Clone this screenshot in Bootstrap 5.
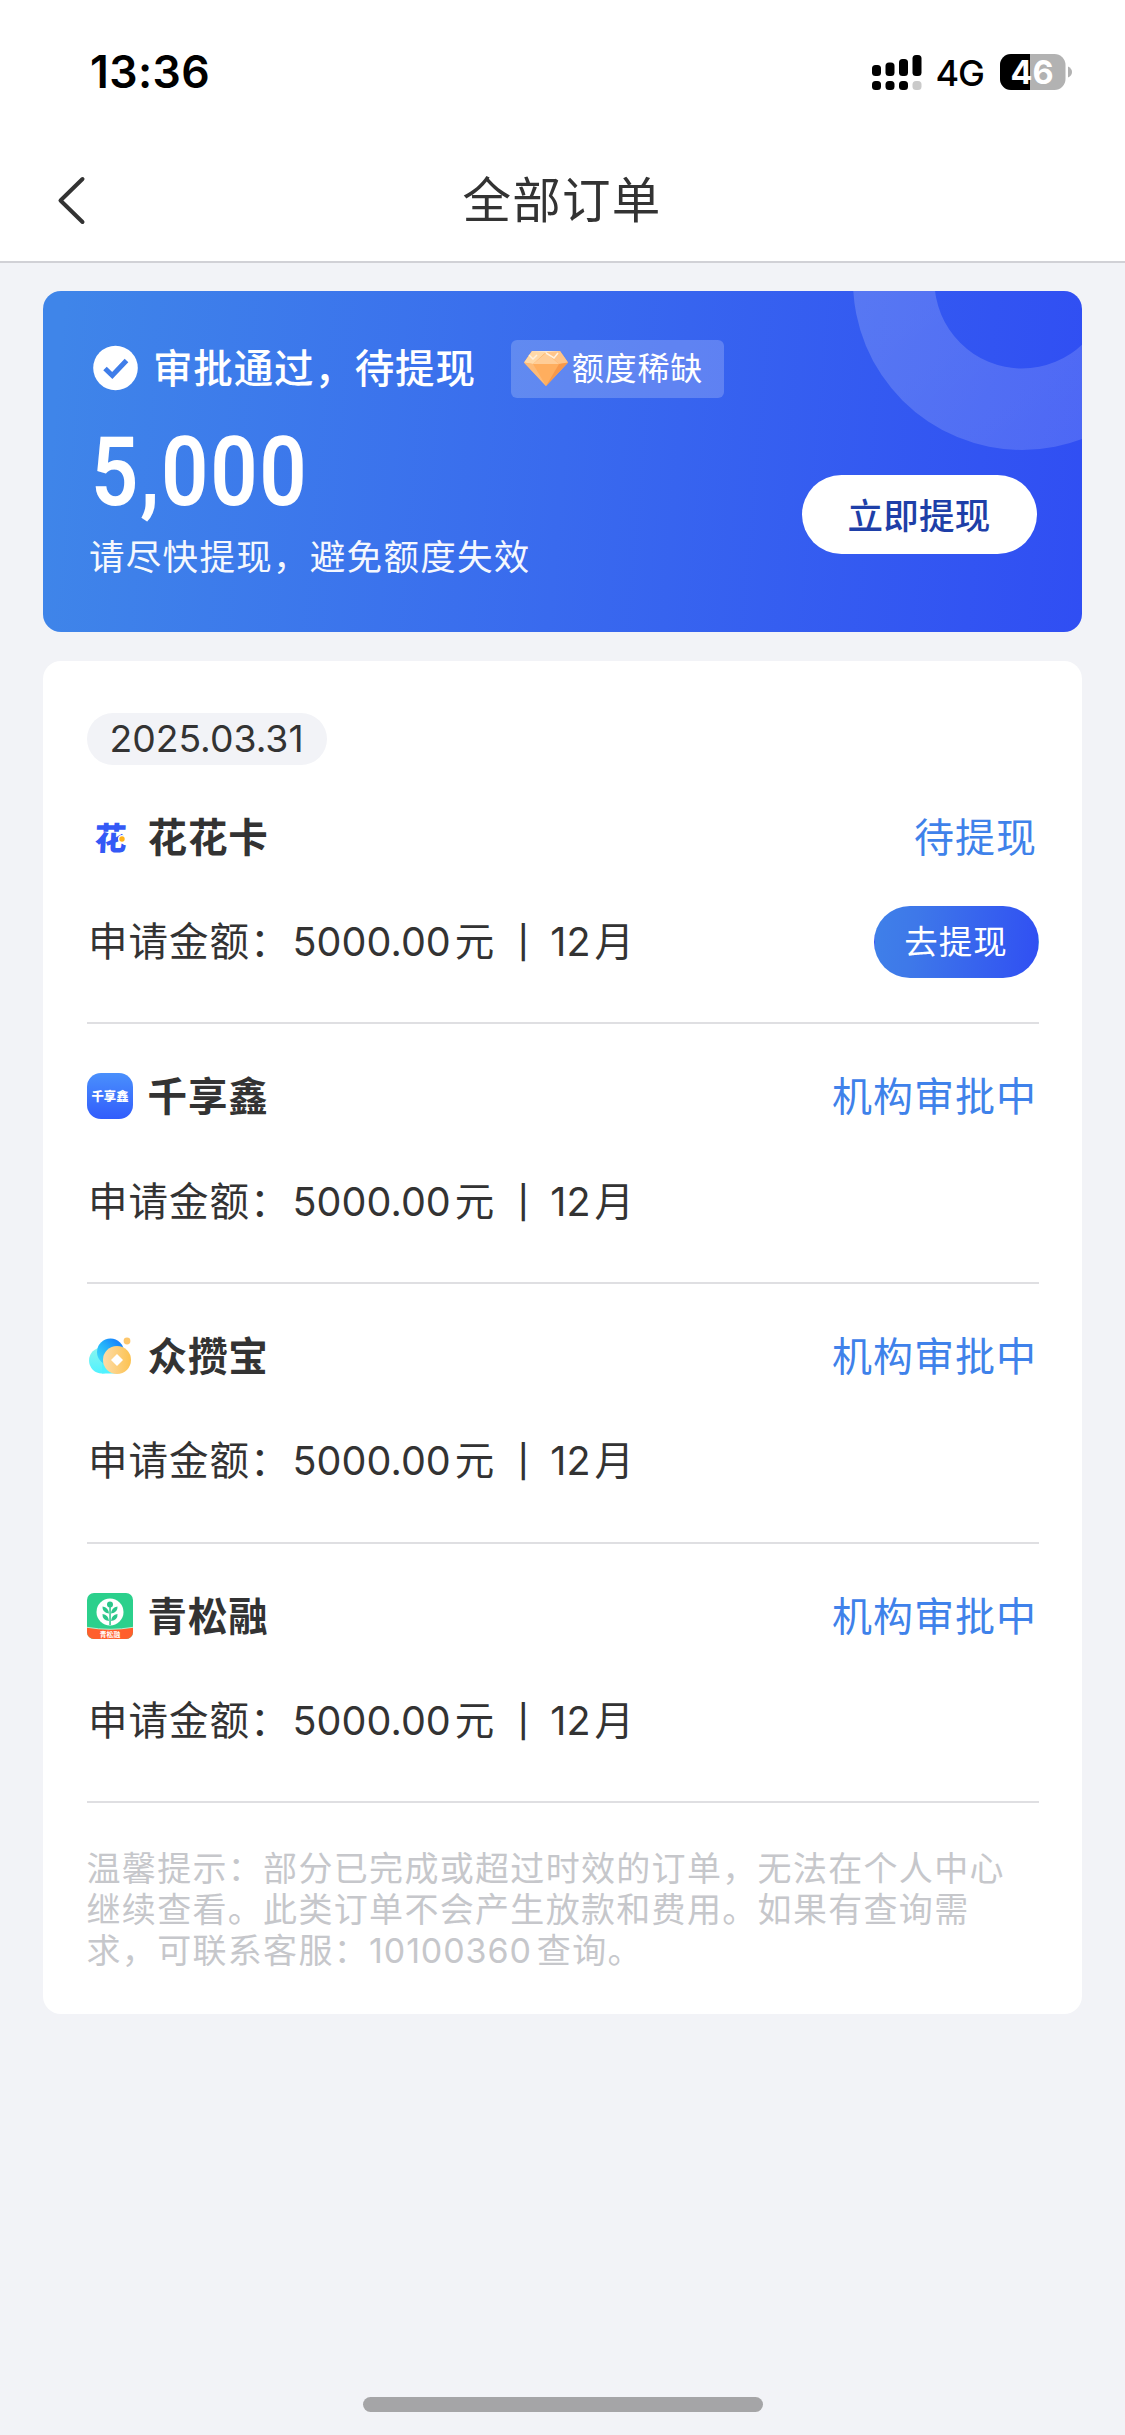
<!DOCTYPE html>
<html lang="zh-CN">
<head>
<meta charset="utf-8">
<meta name="viewport" content="width=device-width, initial-scale=1">
<title>全部订单</title>
<link href="https://cdn.jsdelivr.net/npm/bootstrap@5.3.0/dist/css/bootstrap.min.css" rel="stylesheet">
<style>
body{background:#f2f3f7;color:#333;font-family:Inter,"Noto Sans CJK SC",sans-serif;min-height:2435px}
svg{display:block;flex:none;overflow:visible}
.status-bar{height:144px;padding:0 52px 0 90px}
.clock{font-size:44.5px;font-weight:600;color:#000;line-height:144px;letter-spacing:.4px}
.net{font-size:36px;font-weight:500;color:#000;line-height:144px;margin:1px 16px 0 13px;letter-spacing:-1px}
.title-bar{height:119px;padding:0 56px 4px 55px;border-bottom:2px solid #d1d1d6}
.title-text{font-size:48.5px;letter-spacing:1.2px;line-height:56px}
.side{width:60px}
.wrap{padding:28px 43px 0 43px}
.banner{height:341px;border-radius:18px;background:linear-gradient(95deg,#3f85e9 2%,#396aee 50%,#304ef3 100%);color:#fff}
.ring{right:0;top:0;overflow:hidden}
.banner-body{padding:48px 45px 0 50px}
.pass{font-size:39.5px;font-weight:500;letter-spacing:.85px;line-height:58px;margin-left:15px;padding-top:1px}
.scarce{height:58px;border-radius:6px;background:rgba(255,255,255,.2);font-size:32px;letter-spacing:.8px;width:213px;padding-left:13px;margin-left:35px}
.amount{font-family:Roboto,sans-serif;font-size:95.5px;font-weight:600;line-height:96px;transform:scaleX(.87);transform-origin:0 50%;margin:26px 0 0 -2px;width:280px;letter-spacing:1.8px}
.hint{font-size:35.5px;letter-spacing:1.3px;line-height:50px;margin-left:-4px;margin-top:13px;opacity:.95}
.btn-now{width:235px;height:79px;background:#fff;color:#1e3fa8;font-size:35.5px;font-weight:500;right:45.5px;top:184px;letter-spacing:.3px;line-height:1;padding:4px 0 0}
.orders{margin-top:28.5px;border-radius:18px;background:#fff;height:1353px;padding:52px 43.5px 0 43.5px}
.date-pill{width:240px;height:52px;background:#f2f3f7;font-size:37.3px;line-height:52px}
.order{height:259.7px;padding-top:49px;border-bottom:2px solid #dfdfe2}
.order-head{height:46px}
.order-name{font-size:39.5px;font-weight:700;letter-spacing:.9px;line-height:46px;margin-left:15px;padding-top:2px}
.state{color:#3f82ea;font-size:40px;letter-spacing:1px;line-height:46px;padding-top:2px;margin-right:1.5px}
.order-info{height:72px;margin-top:46px;font-size:39.5px;line-height:72px}
.lbl{width:206px;letter-spacing:1px;padding:1px 0 0 1.5px}
.num{letter-spacing:.05px;padding-top:1px}
.yuan{margin-left:4px;padding-top:1px}
.rule-mark{font-size:32px;font-weight:500;width:20px;text-align:center;margin:0 17px 0 19px;padding-top:3px}
.mon{margin-left:4px;padding-top:1px}
.btn-go{width:165px;height:72px;background:linear-gradient(97deg,#3f80e9,#3e78e9 25%,#304ff3);color:#fff;font-size:33.5px;letter-spacing:1px;line-height:1;padding:2px 0 0}
.tips{font-size:34px;letter-spacing:1.32px;line-height:41px;color:#c6c7cb;margin:45px -10px 0 0}
.tips .tel{letter-spacing:.9px;margin-right:5px}
.home-bar{width:400px;height:15px;background:#a5a5a7;margin:383px auto 0}
</style>
</head>
<body>
<header class="bg-white">
  <div class="status-bar d-flex align-items-center justify-content-between">
    <span class="clock">13:36</span>
    <div class="d-flex align-items-center">
      <svg width="50" height="36" viewBox="0 0 50 36"><g fill="#000"><rect x="0" y="11" width="9" height="11" rx="3.500"/><rect x="13.500" y="8.500" width="9" height="13.500" rx="3.500"/><rect x="27" y="5" width="9" height="17" rx="3.500"/><rect x="40.500" y="1" width="9" height="21" rx="3.500"/><rect x="0" y="27" width="9" height="9" rx="3.500"/><rect x="13.500" y="27" width="9" height="9" rx="3.500"/><rect x="27" y="27" width="9" height="9" rx="3.500"/></g><rect x="40.500" y="27" width="9" height="9" rx="3.500" fill="#cacaca"/></svg>
      <span class="net">4G</span>
      <svg width="73" height="36" viewBox="0 0 73 36"><defs><clipPath id="cell"><rect width="65.500" height="36" rx="11"/></clipPath></defs><g clip-path="url(#cell)"><rect width="66" height="36" fill="#b2b2b2"/><rect width="30" height="36"/></g><path d="M68 12.500q4 2 4 5.500t-4 5.500z" fill="#b2b2b2"/><text x="32" y="29.500" text-anchor="middle" fill="#fff" font-family="Inter" font-size="32.500" font-weight="700">46</text></svg>
    </div>
  </div>
  <nav class="title-bar d-flex align-items-center justify-content-between">
    <div class="side"><svg width="32" height="50" viewBox="0 0 32 50"><path d="M27.500 3L5.500 24.500L27.500 46" fill="none" stroke="#333" stroke-width="4" stroke-linecap="round" stroke-linejoin="round"/></svg></div>
    <span class="title-text">全部订单</span>
    <div class="side"></div>
  </nav>
</header>
<main class="wrap">
  <section class="banner position-relative overflow-hidden">
    <svg class="ring position-absolute" width="230" height="160" viewBox="0 0 230 160"><defs><linearGradient id="rg" x1="0" y1="0" x2="1" y2="1"><stop offset="0" stop-color="#fff" stop-opacity=".19"/><stop offset="1" stop-color="#fff" stop-opacity=".13"/></linearGradient></defs><path fill="url(#rg)" fill-rule="evenodd" d="M1-10a169 169 0 0 0 338 0a169 169 0 0 0-338 0zM82.500-10a87.500 87.500 0 0 0 175 0a87.500 87.500 0 0 0-175 0z"/></svg>
    <div class="banner-body">
      <div class="d-flex align-items-center">
        <svg width="45" height="45" viewBox="0 0 45 45"><circle cx="22.500" cy="22" r="22.300" fill="#fff"/><path d="M12 22.500l7.300 7L33.500 14.500" fill="none" stroke="#3f7de9" stroke-width="5"/></svg>
        <span class="pass">审批通过，待提现</span>
        <span class="scarce d-flex align-items-center">
          <svg width="44" height="35" viewBox="0 0 44 35" class="me-1"><path d="M8 0h28l8 11.500L22 35 0 11.500z" fill="#fdb266"/><path d="M8 0h28l-6 2-8 0-12 1z" fill="#ffe9cf"/><path d="M8 0l14 1L9 13 0 11.500z" fill="#ffd9a8"/><path d="M9 13L22 2l13 11z" fill="#ffcd97"/><path d="M36 0l8 11.500L35 13 22 1z" fill="#ffc58a"/><path d="M9 13h26L22 35z" fill="#ffae5e"/><path d="M35 13l9-1.500L22 35z" fill="#f8994a"/><path d="M0 11.500L9 13l13 22z" fill="#fdbb78"/><path d="M5 4l4 4 4-4M22 2l8 5 4-5" fill="none" stroke="#fff1de" stroke-width="1.500"/></svg>额度稀缺</span>
      </div>
      <div class="amount">5,000</div>
      <div class="hint">请尽快提现，避免额度失效</div>
    </div>
    <button class="btn btn-now rounded-pill position-absolute">立即提现</button>
  </section>

  <section class="orders">
    <div class="date-pill rounded-pill text-center">2025.03.31</div>

    <article class="order">
      <div class="order-head d-flex align-items-center">
        <svg width="46" height="46" viewBox="0 0 46 46"><text transform="translate(7 35.500) skewX(-3)" font-family="Noto Sans CJK SC" font-size="32" font-weight="900" fill="#3459f6">花</text><circle cx="35" cy="25" r="4" fill="#fff"/><circle cx="35" cy="25" r="2.700" fill="#ffb31a"/></svg>
        <span class="order-name">花花卡</span><span class="state ms-auto">待提现</span>
      </div>
      <div class="order-info d-flex align-items-center"><span class="lbl">申请金额：</span><span class="num">5000.00</span><span class="yuan">元</span><span class="rule-mark">|</span><span class="num">12</span><span class="mon">月</span><button class="btn btn-go rounded-pill ms-auto">去提现</button></div>
    </article>

    <article class="order">
      <div class="order-head d-flex align-items-center">
        <svg width="46" height="46" viewBox="0 0 46 46"><defs><linearGradient id="bl" x2="0" y2="1"><stop stop-color="#4a90fc"/><stop offset="1" stop-color="#315cfc"/></linearGradient></defs><rect width="46" height="46" rx="14" fill="url(#bl)"/><text x="23" y="27.500" text-anchor="middle" fill="#fff" font-family="Noto Sans CJK SC" font-size="12.300" font-weight="900">千享鑫</text></svg>
        <span class="order-name">千享鑫</span><span class="state ms-auto">机构审批中</span>
      </div>
      <div class="order-info d-flex align-items-center"><span class="lbl">申请金额：</span><span class="num">5000.00</span><span class="yuan">元</span><span class="rule-mark">|</span><span class="num">12</span><span class="mon">月</span></div>
    </article>

    <article class="order">
      <div class="order-head d-flex align-items-center">
        <svg width="46" height="46" viewBox="0 0 46 46"><defs><linearGradient id="cy" x2="0" y2="1"><stop stop-color="#8af5ee"/><stop offset="1" stop-color="#50f2ff"/></linearGradient><linearGradient id="sk" x1="1" x2="0" y2="1"><stop stop-color="#0e6dff"/><stop offset=".5" stop-color="#25b2fa"/><stop offset="1" stop-color="#42e3fb"/></linearGradient><linearGradient id="gd" x2="1"><stop stop-color="#fddcaa"/><stop offset="1" stop-color="#fcc24f"/></linearGradient></defs><circle cx="15" cy="27.500" r="13" fill="url(#cy)"/><path d="M15 40.500h15V28H15z" fill="#50f2ff"/><circle cx="23.500" cy="19" r="13.500" fill="url(#sk)"/><circle cx="30" cy="27" r="14" fill="url(#gd)"/><path d="M30 21l6 6-6 6-6-6z" fill="#fff"/><circle cx="40" cy="8" r="3.400" fill="#fdc66b"/></svg>
        <span class="order-name">众攒宝</span><span class="state ms-auto">机构审批中</span>
      </div>
      <div class="order-info d-flex align-items-center"><span class="lbl">申请金额：</span><span class="num">5000.00</span><span class="yuan">元</span><span class="rule-mark">|</span><span class="num">12</span><span class="mon">月</span></div>
    </article>

    <article class="order">
      <div class="order-head d-flex align-items-center">
        <svg width="46" height="46" viewBox="0 0 46 46"><defs><clipPath id="app"><rect width="46" height="46" rx="7"/></clipPath></defs><g clip-path="url(#app)"><rect width="46" height="46" fill="#2bd08c"/><path d="M0 34.500Q23 38.500 46 34.500V46H0z" fill="#ff5f2c"/><path d="M0 34.300Q23 38.300 46 34.300" fill="none" stroke="#d8f7e5" stroke-width=".8"/></g><circle cx="23" cy="19" r="13.500" fill="#fff"/><g fill="#2bc68a"><circle cx="23" cy="11.500" r="3"/><path d="M22 20.500q-7-1-6.500-7 6 1 6.500 7zM24 20.500q7-1 6.500-7-6 1-6.500 7zM22 28q-7-1-6.500-7 6 1 6.500 7zM24 28q7-1 6.500-7-6 1-6.500 7z"/><rect x="22.300" y="13" width="1.500" height="19"/></g><text x="23" y="44" text-anchor="middle" fill="#fff" font-family="Noto Sans CJK SC" font-size="6.800" font-weight="700">青松融</text></svg>
        <span class="order-name">青松融</span><span class="state ms-auto">机构审批中</span>
      </div>
      <div class="order-info d-flex align-items-center"><span class="lbl">申请金额：</span><span class="num">5000.00</span><span class="yuan">元</span><span class="rule-mark">|</span><span class="num">12</span><span class="mon">月</span></div>
    </article>

    <p class="tips">温馨提示：部分已完成或超过时效的订单，无法在个人中心<br>继续查看。此类订单不会产生放款和费用。如果有查询需<br>求，可联系客服：<span class="tel">10100360</span>查询。</p>
  </section>
  <div class="home-bar rounded-pill"></div>
</main>
<script src="https://cdn.jsdelivr.net/npm/bootstrap@5.3.0/dist/js/bootstrap.bundle.min.js"></script>
</body>
</html>
